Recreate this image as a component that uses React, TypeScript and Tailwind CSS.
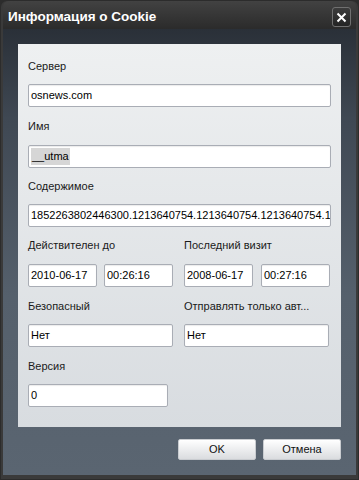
const Field = ({ value, className = '', selected = false }: { value: string; className?: string; selected?: boolean }) => (
  <div
    className={`h-[23px] flex items-center overflow-hidden whitespace-nowrap rounded-[2px] border border-[#a9adb5] bg-white pl-[2px] text-[11px] text-black shadow-[inset_0_1px_1px_rgba(0,0,0,0.08)] ${className}`}
  >
    {selected ? <span className="bg-[#d6d6d6] px-[1px]">{value}</span> : value}
  </div>
)

const Label = ({ children, className = '' }: { children: React.ReactNode; className?: string }) => (
  <div className={`h-[18px] text-[11px] leading-[18px] text-[#1a1a1a] whitespace-nowrap ${className}`}>{children}</div>
)

const App = () => {
  return (
    <div
      className="w-[359px] h-[480px] bg-[#2c2c2c] p-[1px] select-none"
      style={{ fontFamily: '"Liberation Sans", Arial, sans-serif' }}
    >
      <div className="h-full rounded-t-[6px] bg-[#3a3a3a] flex flex-col px-[2px] pb-[4px]">
        <div className="h-[28px] flex items-start justify-between pl-[5px] pr-[5px] pt-[6px] bg-gradient-to-b from-[#424242] to-[#2b2b2b] rounded-t-[6px]">
          <span className="text-white font-bold text-[13.5px] leading-[20px]">Информация о Cookie</span>
          <div className="w-[19px] h-[20px] rounded-[3px] border border-[#707070] bg-gradient-to-b from-[#3c3c3c] to-[#242424] flex items-center justify-center">
            <svg width="11" height="11" viewBox="0 0 11 11">
              <path d="M1.5 1.5 L9.5 9.5 M9.5 1.5 L1.5 9.5" stroke="white" strokeWidth="2" />
            </svg>
          </div>
        </div>
        <div className="flex-1 flex flex-col pt-[15px] px-[15px] bg-[linear-gradient(to_bottom,#2a3038_0%,#3f4853_20%,#55606c_60%,#5a6571_100%)]">
          <div className="h-[383px] bg-[linear-gradient(to_bottom,#eef0f1,#d8dce0)] pl-[10px] pr-[10px] pt-[13px] flex flex-col">
            <Label>Сервер</Label>
            <Field value="osnews.com" className="mt-[9px] w-[303px]" />
            <Label className="mt-[10px]">Имя</Label>
            <Field value="__utma" selected className="mt-[10px] w-[303px]" />
            <Label className="mt-[9px]">Содержимое</Label>
            <Field value="1852263802446300.1213640754.1213640754.1213640754.1" className="mt-[9px] w-[303px]" />
            <div className="mt-[9px] flex gap-[11px]">
              <div className="w-[145px]">
                <Label>Действителен до</Label>
                <div className="mt-[10px] flex gap-[7px]">
                  <Field value="2010-06-17" className="w-[69px]" />
                  <Field value="00:26:16" className="w-[69px]" />
                </div>
              </div>
              <div className="w-[146px]">
                <Label>Последний визит</Label>
                <div className="mt-[10px] flex gap-[8px]">
                  <Field value="2008-06-17" className="w-[69px]" />
                  <Field value="00:27:16" className="w-[69px]" />
                </div>
              </div>
            </div>
            <div className="mt-[10px] flex gap-[11px]">
              <div className="w-[145px]">
                <Label>Безопасный</Label>
                <Field value="Нет" className="mt-[9px] w-[145px]" />
              </div>
              <div className="w-[146px]">
                <Label>Отправлять только авт...</Label>
                <Field value="Нет" className="mt-[9px] w-[145px]" />
              </div>
            </div>
            <Label className="mt-[10px]">Версия</Label>
            <Field value="0" className="mt-[9px] w-[140px]" />
          </div>
          <div className="mt-[12px] flex justify-end gap-[7px]">
            <button className="w-[78px] h-[21px] rounded-[2px] border border-[#c9ccd0] bg-gradient-to-b from-white to-[#dadcdf] text-[11px] text-[#111]">
              OK
            </button>
            <button className="w-[78px] h-[21px] rounded-[2px] border border-[#c9ccd0] bg-gradient-to-b from-white to-[#dadcdf] text-[11px] text-[#111]">
              Отмена
            </button>
          </div>
        </div>
      </div>
    </div>
  )
}

export default App
